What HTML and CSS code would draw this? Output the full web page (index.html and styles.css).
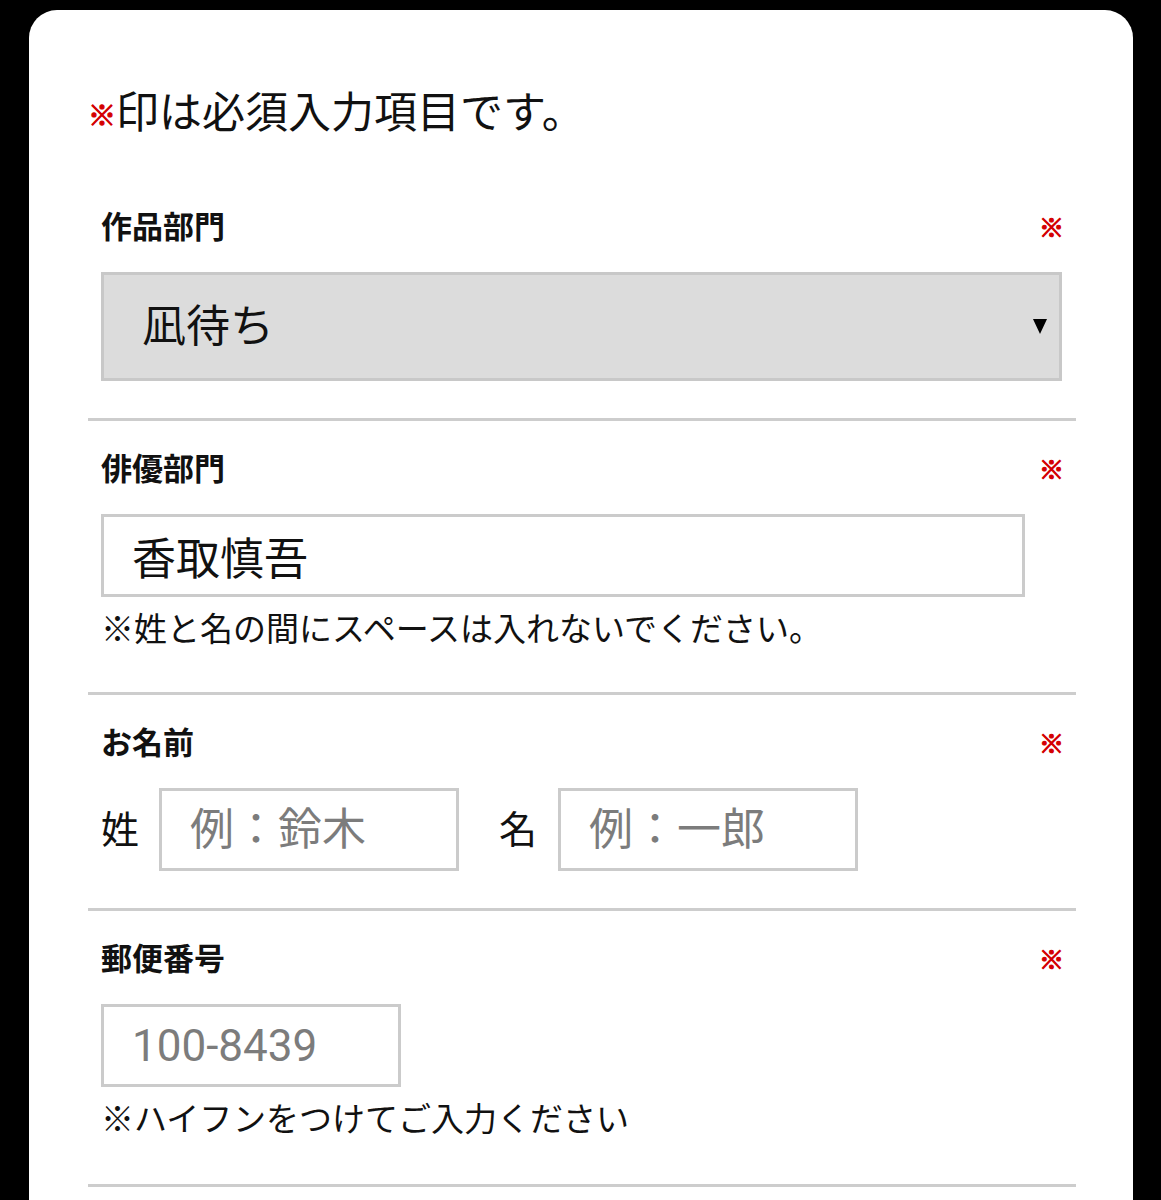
FILE: index.html
```html
<!DOCTYPE html>
<html lang="ja">
<head>
    <meta charset="UTF-8">
    <meta name="viewport" content="width=device-width, initial-scale=1.0">
    <title>応募フォーム</title>
    <link rel="stylesheet" href="styles.css">
</head>
<body>
    <div class="card">
        <p class="lead"><span class="mark">※</span>印は必須入力項目です。</p>

        <div class="section">
            <div class="label-row">
                <label for="work">作品部門</label>
                <span class="required">※</span>
            </div>
            <div class="select-wrap">
                <select id="work" class="select">
                    <option>凪待ち</option>
                </select>
                <span class="arrow"></span>
            </div>
        </div>

        <div class="section has-note">
            <div class="label-row">
                <label for="actor">俳優部門</label>
                <span class="required">※</span>
            </div>
            <input type="text" id="actor" class="input input-wide" value="香取慎吾">
            <p class="note">※姓と名の間にスペースは入れないでください。</p>
        </div>

        <div class="section">
            <div class="label-row">
                <label>お名前</label>
                <span class="required">※</span>
            </div>
            <div class="name-row">
                <span class="name-label">姓</span>
                <input type="text" class="input input-short" placeholder="例：鈴木">
                <span class="name-label name-gap">名</span>
                <input type="text" class="input input-short" placeholder="例：一郎">
            </div>
        </div>

        <div class="section has-note last">
            <div class="label-row">
                <label for="zip">郵便番号</label>
                <span class="required">※</span>
            </div>
            <input type="text" id="zip" class="input input-short" placeholder="100-8439">
            <p class="note">※ハイフンをつけてご入力ください</p>
        </div>
    </div>
</body>
</html>
```

FILE: styles.css
```css
* {
    margin: 0;
    padding: 0;
    box-sizing: border-box;
}

body {
    font-family: Roboto, "Noto Sans CJK JP", sans-serif;
    background: #000;
    color: #111;
    padding-top: 10px;
    min-height: 100vh;
}

.card {
    margin: 0 28px 0 29px;
    background: #fff;
    border-radius: 28px 28px 0 0;
    padding: 75px 57px 40px 59px;
    min-height: 1190px;
}

.lead {
    font-size: 43px;
    line-height: 56px;
    margin-bottom: 38px;
    color: #111;
}

.lead .mark {
    color: #d40000;
    font-size: 28px;
    line-height: 1;
    vertical-align: 2px;
    -webkit-text-stroke: 1px #d40000;
}

.section {
    padding: 29px 14px 37px 13px;
    border-bottom: 3px solid #cdcdcd;
}

.section.has-note {
    padding-bottom: 40px;
}

.section.last {
    padding-bottom: 42px;
}

.label-row {
    display: flex;
    justify-content: space-between;
    align-items: center;
    height: 40px;
    margin-bottom: 24px;
}

.label-row label {
    font-size: 31px;
    font-weight: 700;
    line-height: 40px;
}

.required {
    color: #d40000;
    font-size: 25px;
    font-weight: 700;
    line-height: 1;
    margin-right: -2px;
    -webkit-text-stroke: 1.2px #d40000;
}

.select-wrap {
    position: relative;
}

.select {
    display: block;
    width: 100%;
    height: 109px;
    appearance: none;
    -webkit-appearance: none;
    background: #dcdcdc;
    border: 3px solid #c8c8c8;
    border-radius: 0;
    padding-left: 38px;
    font-family: inherit;
    font-size: 44px;
    color: #111;
    outline: none;
}

.arrow {
    position: absolute;
    right: 15px;
    top: 47px;
    width: 0;
    height: 0;
    border-left: 7px solid transparent;
    border-right: 7px solid transparent;
    border-top: 15px solid #000;
    pointer-events: none;
}

.input {
    display: block;
    height: 83px;
    border: 3px solid #cbcbcb;
    border-radius: 0;
    background: #fff;
    padding-left: 28px;
    font-family: inherit;
    font-size: 44px;
    color: #111;
    outline: none;
}

.input::placeholder {
    color: #7c7c7c;
}

.input-wide {
    width: 924px;
}

.input-short {
    width: 300px;
}

.note {
    margin-top: 11px;
    font-size: 33px;
    line-height: 44px;
    color: #111;
}

.name-row {
    display: flex;
    align-items: center;
}

.name-label {
    font-size: 38px;
    line-height: 44px;
    margin-right: 20px;
}

.name-gap {
    margin-left: 40px;
    margin-right: 21px;
}
```
